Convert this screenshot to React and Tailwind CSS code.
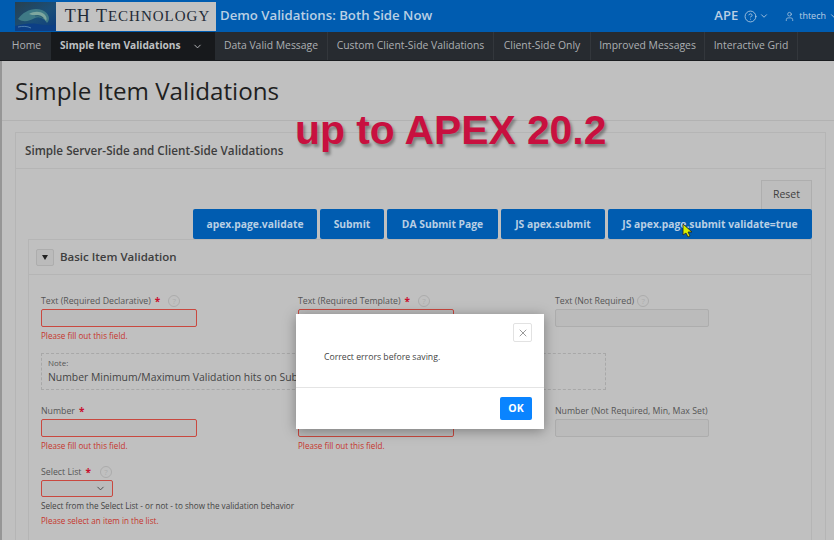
import React from 'react';
import { ChevronDown, CircleHelp, User, X } from 'lucide-react';

const navItems = [
  { label: 'Data Valid Message', width: 'w-[113px]' },
  { label: 'Custom Client-Side Validations', width: 'w-[166px]' },
  { label: 'Client-Side Only', width: 'w-[97px]' },
  { label: 'Improved Messages', width: 'w-[114px]' },
  { label: 'Interactive Grid', width: 'w-[93px]' },
];

const actionButtons = [
  { label: 'apex.page.validate', width: 'w-[124px]' },
  { label: 'Submit', width: 'w-[64px]' },
  { label: 'DA Submit Page', width: 'w-[111px]' },
  { label: 'JS apex.submit', width: 'w-[104px]' },
  { label: 'JS apex.page.submit validate=true', width: 'w-[204px]' },
];

const Help = () => (
  <span className="flex h-[12px] w-[12px] items-center justify-center rounded-full border border-[#acacac] text-[8px] leading-none text-[#acacac]">?</span>
);

const Required = () => <span className="ml-[4px] text-[10px] font-bold text-[#c8102e]">*</span>;

const Field = ({ label, required, help, error }) => (
  <div className="h-[46px] w-[156px]">
    <div className="flex h-[17px] items-center whitespace-nowrap pt-[1px] text-[8.75px] leading-none text-[#555]">
      {label}
      {required && <Required />}
      {help && <span className={required ? 'ml-[8px]' : 'ml-[3px]'}><Help /></span>}
    </div>
    <div className={`h-[18px] rounded-[2px] border ${required ? 'w-[156px] border-[#c9483f]' : 'w-[154px] border-[#adadad]'} bg-[#bbbbbb]`} />
    {error && <div className="mt-[3px] whitespace-nowrap text-[8.1px] leading-[12px] text-[#c6352c]">{error}</div>}
  </div>
);

const WaveLogo = () => (
  <svg width="41" height="29" viewBox="0 0 41 29" className="shrink-0">
    <defs>
      <linearGradient id="sea" x1="0" y1="0" x2="1" y2="1">
        <stop offset="0" stopColor="#27404f" />
        <stop offset="0.55" stopColor="#1b4f78" />
        <stop offset="1" stopColor="#0b3a80" />
      </linearGradient>
    </defs>
    <rect width="41" height="29" fill="url(#sea)" />
    <path d="M3 17C9 9 18 5 27 8c7 3 9 9 5 13-3-5-8-7-12-5-6 3-11 5-17 1z" fill="#3f7a86" />
    <path d="M14 12c5-3 11-3 15 0 3 3 3 5 2 7-2-4-6-6-10-6-3 0-5 0-7-1z" fill="#7ea79f" />
    <path d="M20 14c3-1 6 0 8 2" stroke="#2c5f74" strokeWidth="1.2" fill="none" />
    <path d="M0 24c8-2 14-3 22-2 7 1 13 2 19 1v6H0z" fill="#0c3f86" />
    <path d="M3 25c5-1 9-1 13 1" stroke="#5f8fb8" strokeWidth="0.8" fill="none" />
  </svg>
);

const App = () => {
  return (
    <div className="relative flex h-[540px] w-[834px] flex-col overflow-hidden bg-[#c0c0c0] font-['Open_Sans',sans-serif]">
      {/* Header */}
      <header className="flex h-[32px] shrink-0 items-center bg-[#005cb0] pl-[15px]">
        <WaveLogo />
        <div className="flex h-[29px] w-[160px] items-center justify-center whitespace-nowrap bg-[#c2c2c2] pl-[3px] font-['Liberation_Serif',serif] text-[18px] leading-none tracking-[1px] text-[#1f2a36]">
          TH T<span className="text-[15px]">ECHNOLOGY</span>
        </div>
        <div className="ml-[4px] whitespace-nowrap text-[13.2px] font-semibold text-[#b9cfe4]">Demo Validations: Both Side Now</div>
        <div className="ml-auto mr-[-5px] flex items-center text-[#b9cfe4]">
          <span className="text-[13px] font-semibold">APE</span>
          <CircleHelp size={13} strokeWidth={1.5} className="ml-[6px]" />
          <ChevronDown size={10} className="ml-[2px]" />
          <User size={11} strokeWidth={1.5} className="ml-[15px]" />
          <span className="ml-[4px] text-[9px]">thtech</span>
          <ChevronDown size={10} className="ml-[3px]" />
        </div>
      </header>

      {/* Nav */}
      <nav className="flex h-[29px] shrink-0 items-stretch border-b border-[#1a1c1f] bg-[#272b30] text-[10.4px] text-[#adb0b3]">
        <div className="flex w-[51px] items-center justify-center pl-[2px]">Home</div>
        <div className="flex w-[164px] items-center bg-[#17191c] pl-[9px] text-[10.2px] font-bold text-[#bfc1c3]">
          <span className="whitespace-nowrap">Simple Item Validations</span>
          <ChevronDown size={11} className="ml-[11px]" />
        </div>
        {navItems.map((item) => (
          <div key={item.label} className={`flex ${item.width} items-center justify-center whitespace-nowrap border-r border-[#33373c]`}>
            {item.label}
          </div>
        ))}
      </nav>

      {/* Page */}
      <main className="flex min-h-0 flex-1 flex-col border-l-[2px] border-[#969696]">
        <div className="flex h-[60px] shrink-0 items-center border-b border-[#b2b2b2] pl-[13px]">
          <h1 className="pt-[1px] text-[24.2px] leading-none text-[#1f1f1f]">Simple Item Validations</h1>
        </div>

        <section className="ml-[13px] mr-[8px] mt-[11px] flex-1 border border-b-0 border-[#b5b5b5]">
          <div className="flex h-[36px] items-center border-b border-[#b5b5b5] pl-[9px] pt-[1px] text-[11.7px] font-semibold text-[#3d3d3d]">
            Simple Server-Side and Client-Side Validations
          </div>

          <div className="flex flex-col items-end pr-[13px] pt-[11px]">
            <div className="flex h-[29px] w-[51px] items-center justify-center border border-b-0 border-[#aeaeae] bg-[#bdbdbd] text-[10.5px] text-[#3f3f3f]">Reset</div>
            <div className="flex gap-[3px]">
              {actionButtons.map((btn) => (
                <div key={btn.label} className={`flex h-[30px] ${btn.width} items-center justify-center whitespace-nowrap rounded-[2px] bg-[#005cb0] pt-[1px] text-[10.3px] font-bold text-[#b9cfe4]`}>
                  {btn.label}
                </div>
              ))}
            </div>
          </div>

          <div className="ml-[12px] mr-[13px] h-[320px] border border-b-0 border-[#b5b5b5]">
            <div className="flex h-[35px] items-center border-b border-[#b5b5b5] pl-[7px]">
              <div className="flex h-[17px] w-[18px] items-center justify-center rounded-[2px] border border-[#adadad] bg-[#bbbbbb]">
                <span className="h-0 w-0 border-x-[3.5px] border-t-[5px] border-x-transparent border-t-[#222]" />
              </div>
              <span className="ml-[6px] pb-[1px] text-[11.5px] font-semibold text-[#3d3d3d]">Basic Item Validation</span>
            </div>

            <div className="pl-[12px] pt-[17px]">
              <div className="grid grid-cols-[257px_257px_257px]">
                <Field label="Text (Required Declarative)" required help error="Please fill out this field." />
                <Field label="Text (Required Template)" required help error="Please fill out this field." />
                <Field label="Text (Not Required)" help />
              </div>

              <div className="mt-[15px] h-[37px] w-[565px] border border-dashed border-[#a8a8a8] pl-[6px] pt-[3px]">
                <div className="text-[8px] leading-[11px] text-[#555]">Note:</div>
                <div className="whitespace-nowrap text-[10.4px] leading-[19px] text-[#444]">Number Minimum/Maximum Validation hits on Submit</div>
              </div>

              <div className="mt-[12px] grid grid-cols-[257px_257px_257px]">
                <Field label="Number" required error="Please fill out this field." />
                <Field label="Number (Required, Min, Max)" required error="Please fill out this field." />
                <Field label="Number (Not Required, Min, Max Set)" />
              </div>

              <div className="mt-[15px] flex h-[17px] items-center pt-[1px] text-[8.75px] leading-none text-[#555]">
                Select List<Required /><span className="ml-[9px]"><Help /></span>
              </div>
              <div className="flex h-[17px] w-[72px] items-center justify-end rounded-[2px] border border-[#c9483f] bg-[#bbbbbb] pr-[6px] text-[#444]">
                <ChevronDown size={11} />
              </div>
              <div className="mt-[3px] whitespace-nowrap text-[8.15px] leading-[12px] text-[#444]">Select from the Select List - or not - to show the validation behavior</div>
              <div className="mt-[3px] whitespace-nowrap text-[8.1px] leading-[12px] text-[#c6352c]">Please select an item in the list.</div>
            </div>
          </div>
        </section>
      </main>

      {/* Annotation over the page */}
      <div className="absolute left-[295px] top-[106px] whitespace-nowrap font-['Liberation_Sans',sans-serif] text-[40.8px] font-bold leading-[48px] text-[#c8103f] [text-shadow:2px_3px_3px_rgba(0,0,0,0.35)]">
        up to APEX 20.2
      </div>

      {/* Mouse pointer */}
      <svg width="12" height="15" viewBox="0 0 12 15" className="absolute left-[682px] top-[223px]">
        <path d="M1 1v11l3-2 2 4 2-1-2-4h4z" fill="#d6ef00" stroke="#222" strokeWidth="0.8" />
      </svg>

      {/* Dialog */}
      <div className="absolute left-[296px] top-[314px] h-[115px] w-[248px] bg-white shadow-[0_2px_12px_rgba(0,0,0,0.35)]">
        <div className="flex h-[74px] border-b border-[#e4e4e4]">
          <div className="pl-[28px] pt-[36px] text-[8.7px] leading-[14px] text-[#444]">Correct errors before saving.</div>
          <div className="ml-auto mr-[12px] mt-[9px] flex h-[19px] w-[19px] items-center justify-center rounded-[2px] border border-[#e2e2e2] text-[#555]">
            <X size={12} strokeWidth={1.2} />
          </div>
        </div>
        <div className="flex justify-end pr-[12px] pt-[9px]">
          <div className="flex h-[23px] w-[32px] items-center justify-center rounded-[2px] bg-[#0a84ff] text-[10.5px] font-bold text-white">OK</div>
        </div>
      </div>
    </div>
  );
};

export default App;
